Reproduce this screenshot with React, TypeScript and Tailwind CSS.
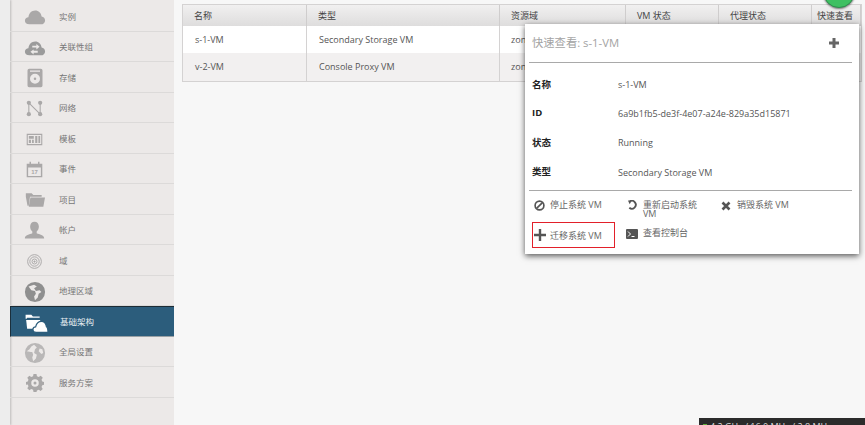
import type { ReactNode } from "react";

const cjk = "font-['Open_Sans','Noto_Sans_CJK_SC',sans-serif]";

function Svg({ children, w = 22, h = 22 }: { children: ReactNode; w?: number; h?: number }) {
  return (
    <svg width={w} height={h} viewBox="0 0 24 24" fill="currentColor">
      {children}
    </svg>
  );
}

const cloud = "M6 20C2.500 20 1 18 1 16c0-2.200 1.800-3.600 3.800-3.700C5.400 8 8.300 5 12.200 5c3.800 0 6.400 2.800 7 6.400 2.200.3 3.800 2 3.800 4.300 0 2.500-2 4.300-4.500 4.300z";

const menu: { label: string; icon: ReactNode; active?: boolean }[] = [
  { label: "实例", icon: <Svg><path d={cloud} /></Svg> },
  {
    label: "关联性组",
    icon: (
      <Svg>
        <path d={cloud} className="text-[#9b9b9b]" />
        <path d="M9 9.500h4.500V7.500l3.500 3-3.500 3v-2H9zM15 15H10.500v-1.500L7 16l3.500 3v-1.800H15z" fill="#ece9e8" />
      </Svg>
    ),
  },
  {
    label: "存储",
    icon: (
      <Svg w={20} h={20}>
        <path fillRule="evenodd" d="M5 1h14a2 2 0 0 1 2 2v18a2 2 0 0 1-2 2H5a2 2 0 0 1-2-2V3a2 2 0 0 1 2-2zm7 6a6 6 0 1 0 0 12 6 6 0 0 0 0-12zm0 4.500a1.500 1.500 0 1 1 0 3 1.500 1.500 0 0 1 0-3zM6 3v1.500h12V3z" />
      </Svg>
    ),
  },
  {
    label: "网络",
    icon: (
      <Svg w={17} h={17}>
        <path d="M4 4v16M4 4l16 16M20 4v16" stroke="currentColor" strokeWidth="1.500" fill="none" />
        <circle cx="4" cy="4" r="3" />
        <circle cx="20" cy="4" r="3" />
        <circle cx="4" cy="20" r="3" />
        <circle cx="20" cy="20" r="3" />
      </Svg>
    ),
  },
  {
    label: "模板",
    icon: (
      <Svg w={17} h={17}>
        <path fillRule="evenodd" d="M1 4h22v16H1zm1.500 1.500v13h19v-13zM4 7h7v4H4zm9 0h3v10h-3zm4.500 0H20v10h-2.500zM4 12.500h3V17H4zm4.500 0H11V17H8.500z" />
      </Svg>
    ),
  },
  {
    label: "事件",
    icon: (
      <div className="relative flex h-[17px] w-[17px] items-center justify-center">
        <Svg w={17} h={17}>
          <path fillRule="evenodd" d="M1 4h4V1h2v3h10V1h2v3h4v19H1zm2 5v12h18V9z" />
        </Svg>
        <span className="absolute top-[7px] font-['Liberation_Sans',sans-serif] text-[6px] leading-[8px] font-bold">17</span>
      </div>
    ),
  },
  {
    label: "项目",
    icon: (
      <Svg w={20} h={20}>
        <path d="M1 4h7l2 2h10v2H6L4.500 19H3L1 8zM6.500 9H24l-2 11H4.500z" />
      </Svg>
    ),
  },
  {
    label: "帐户",
    icon: (
      <Svg w={21} h={21}>
        <path d="M12 2c3 0 5 2.300 5 5.500 0 2.500-1 4.500-2.500 5.500v2c3 1.200 8.500 2 8.500 5.500v.5H1v-.5c0-3.500 5.500-4.300 8.500-5.500v-2C8 12 7 10 7 7.500 7 4.300 9 2 12 2z" />
      </Svg>
    ),
  },
  {
    label: "域",
    icon: (
      <svg width="15" height="15" viewBox="0 0 24 24" fill="none" stroke="currentColor" strokeWidth="1.500">
        <circle cx="12" cy="12" r="11" />
        <circle cx="12" cy="12" r="7.500" />
        <circle cx="12" cy="12" r="4" />
        <circle cx="12" cy="12" r="1" fill="currentColor" />
      </svg>
    ),
  },
  {
    label: "地理区域",
    icon: (
      <div className="text-[#8f8f8f]">
        <Svg>
          <path fillRule="evenodd" d="M12 1a11 11 0 1 1 0 22 11 11 0 0 1 0-22zM5 6l3 4 4 1 1 3-2 3 1 4 3-3 1-4 3-2-2-2-4 1-2-3 3-2-3-2z" />
        </Svg>
      </div>
    ),
  },
  {
    label: "基础架构",
    active: true,
    icon: (
      <Svg w={25} h={25}>
        <path d="M2.500 4.500h5.500l1.500 1.700h6.500v1.300H4l-.5 1H2.500z" />
        <path d="M3 9.500h13.500V18H4z" />
        <path d="M12.500 21.500c-1.800 0-3-1.100-3-2.600 0-1.500 1.200-2.600 2.600-2.700.8-3 3-5.200 5.600-5.200 2.700 0 4.400 2.300 4.800 5 1 .6 1.500 2 1.500 5.500z" stroke="#2c5d7c" strokeWidth="1.200" />
      </Svg>
    ),
  },
  {
    label: "全局设置",
    icon: (
      <div className="text-[#b9b7b7]">
        <Svg>
          <path fillRule="evenodd" d="M12 1a11 11 0 1 1 0 22 11 11 0 0 1 0-22zM3 10c2 0 4 1 6 1l1 3-1 3 1 4 3-3 1-4-3-2 1-4 2-2-3-3-3 2-2 3zm14-3-1 3 3 3 2-1-1-4z" />
        </Svg>
      </div>
    ),
  },
  {
    label: "服务方案",
    icon: (
      <Svg w={18} h={18}>
        <path fillRule="evenodd" d="M10 0h4l.6 3 2.400 1 2.600-1.700 2.800 2.800L20.700 7.700l1 2.300 2.300.6v3.800l-2.300.6-1 2.400 1.600 2.500-2.800 2.800-2.500-1.600-2.400 1L14 24h-4l-.6-2.900-2.400-1-2.500 1.600-2.800-2.800 1.600-2.500-1-2.400L0 14.400v-3.800L2.300 10l1-2.300-1.600-2.600 2.800-2.800L7 4l2.400-1zm2 7a5 5 0 1 0 0 10 5 5 0 0 0 0-10zm0 3a2 2 0 1 1 0 4 2 2 0 0 1 0-4z" />
      </Svg>
    ),
  },
];

const columns = [
  { label: "名称", w: "w-[124px]", pl: "pl-[11px]" },
  { label: "类型", w: "w-[193px]", pl: "pl-[11px]" },
  { label: "资源域", w: "w-[126px]", pl: "pl-[11px]" },
  { label: "VM 状态", w: "w-[93px]", pl: "pl-[11px]" },
  { label: "代理状态", w: "w-[93px]", pl: "pl-[11px]" },
  { label: "快速查看", w: "w-[49px]", pl: "pl-[5px]" },
];

const rows = [
  { name: "s-1-VM", type: "Secondary Storage VM", bg: "bg-white", h: "h-[27px]" },
  { name: "v-2-VM", type: "Console Proxy VM", bg: "bg-[#f2f0f0]", h: "h-[28px]" },
];

const details = [
  { label: "名称", value: "s-1-VM", h: "h-[28px]" },
  { label: "ID", value: "6a9b1fb5-de3f-4e07-a24e-829a35d15871", h: "h-[29px]" },
  { label: "状态", value: "Running", h: "h-[30px]" },
  { label: "类型", value: "Secondary Storage VM", h: "h-[29px]" },
];

function Sidebar() {
  return (
    <div className="flex w-[174px] shrink-0 flex-col pt-px">
      {menu.map((m) => (
        <div key={m.label} className="ml-[10px] flex">
          <div
            className={
              m.active
                ? "flex h-[30.500px] w-[164px] items-center border-t border-b border-l border-t-[#1d2c35] border-b-[#9aa1a5] border-l-[#1b2f3c] bg-[#2c5d7c] pt-[2px] text-white"
                : "flex h-[30.500px] w-[164px] items-center border-b border-[#dcdad9] pt-[3px] text-[#aaa8a8]"
            }
          >
            <div className="flex w-[49px] items-center justify-center">{m.icon}</div>
            <span className={`text-[8.500px] ${m.active ? "text-[#e8eef2]" : "text-[#777]"}`}>{m.label}</span>
          </div>
        </div>
      ))}
    </div>
  );
}

function SystemVmTable() {
  return (
    <div className="mt-[4px] ml-[8px] w-[680px] shrink-0 self-start border border-[#d4d2d2] bg-white text-[9px] text-[#555]">
      <div className="flex h-[21px] bg-gradient-to-b from-[#f1f0f0] to-[#dedddd] text-[#444]">
        {columns.map((c) => (
          <div key={c.label} className={`${c.w} ${c.pl} flex shrink-0 items-center border-r border-[#cfcdcd]`}>
            {c.label}
          </div>
        ))}
      </div>
      {rows.map((r) => (
        <div key={r.name} className={`flex ${r.h} ${r.bg}`}>
          <div className="flex w-[124px] shrink-0 items-center border-r border-[#d4d2d2] pl-[12px]">{r.name}</div>
          <div className="flex w-[193px] shrink-0 items-center border-r border-[#d4d2d2] pl-[12px]">{r.type}</div>
          <div className="flex w-[126px] shrink-0 items-center border-r border-[#d4d2d2] pl-[11px]">zone1</div>
        </div>
      ))}
    </div>
  );
}

function Action({ icon, children, w, boxed }: { icon: ReactNode; children: ReactNode; w: string; boxed?: boolean }) {
  return (
    <div className={`flex ${w} shrink-0 items-start`}>
      <div className={boxed ? "flex h-[26px] w-[83px] items-center border-[1.500px] border-[#e2202a]" : "flex pl-[3px]"}>
        <div className="flex h-[11px] w-[14px] shrink-0 items-center justify-center text-[#555]">{icon}</div>
        <div className={`${boxed ? "ml-[3px]" : "ml-[4px]"} text-[9px] leading-[9px] text-[#666]`}>{children}</div>
      </div>
    </div>
  );
}

function QuickView() {
  return (
    <div className="absolute top-[24px] left-[525px] h-[230px] w-[334px] bg-white pr-[7px] pl-[4px] shadow-[0_2px_6px_rgba(0,0,0,0.65)]">
      <div className="flex h-[39px] items-center justify-between border-b border-[#a9a9a9] pr-[12px] pl-[3px]">
        <span className="text-[11.300px] text-[#a3a3a3]">快速查看: s-1-VM</span>
        <svg width="12" height="12" viewBox="0 0 12 12" fill="#666">
          <path d="M4.500 1h3v3.500H11v3H7.500V11h-3V7.500H1v-3h3.500z" />
        </svg>
      </div>
      <div className="border-b border-[#a9a9a9] pt-[8px] pb-[3px]">
        {details.map((d) => (
          <div key={d.label} className={`flex ${d.h} items-center pl-[3px]`}>
            <span className="w-[86px] shrink-0 text-[9.500px] font-bold text-[#222]">{d.label}</span>
            <span className="text-[9px] text-[#555]">{d.value}</span>
          </div>
        ))}
      </div>
      <div className="flex pt-[9px]">
        <Action
          w="w-[93px]"
          icon={
            <svg width="11" height="11" viewBox="0 0 12 12" fill="none" stroke="currentColor" strokeWidth="1.800">
              <circle cx="6" cy="6" r="4.800" />
              <path d="M2.800 9.200l6.400-6.400" />
            </svg>
          }
        >
          停止系统 VM
        </Action>
        <Action
          w="w-[94px]"
          icon={
            <svg width="11" height="11" viewBox="0 0 12 12" fill="none" stroke="currentColor" strokeWidth="2">
              <path d="M3 1.500a4.300 4.300 0 1 1-.5 7" />
              <path d="M1 .5l4 .3L3 4.500z" fill="currentColor" stroke="none" />
            </svg>
          }
        >
          <div className="w-[56px]">重新启动系统 VM</div>
        </Action>
        <Action
          w="w-[100px]"
          icon={
            <svg width="10" height="10" viewBox="0 0 10 10" stroke="currentColor" strokeWidth="2.600">
              <path d="M1.500 1.500l7 7M8.500 1.500l-7 7" />
            </svg>
          }
        >
          销毁系统 VM
        </Action>
      </div>
      <div className="mt-[4px] flex pl-[3px]">
        <Action
          w="w-[90px]"
          boxed
          icon={
            <svg width="12" height="12" viewBox="0 0 12 12" fill="currentColor">
              <path d="M4.800 0h2.400v4.800H12v2.400H7.200V12H4.800V7.200H0V4.800h4.800z" />
            </svg>
          }
        >
          迁移系统 VM
        </Action>
        <div className="pt-[6px]">
          <Action
            w="w-[100px]"
            icon={
              <svg width="12" height="10" viewBox="0 0 12 10">
                <rect width="12" height="10" rx="1" fill="#555" />
                <path d="M2 2.500L4.500 5 2 7.500M5.500 7.500h3" stroke="#fff" strokeWidth="1" fill="none" />
              </svg>
            }
          >
            查看控制台
          </Action>
        </div>
      </div>
    </div>
  );
}

export default function App() {
  return (
    <div className={`relative flex h-[425px] w-[865px] overflow-hidden bg-[#f7f7f7] ${cjk}`}>
      <div className="absolute top-0 bottom-0 left-0 w-[174px] bg-[#ece9e8]" />
      <div className="absolute top-0 bottom-0 left-0 w-[10px] bg-[#ededed] shadow-[1px_0_2px_rgba(0,0,0,0.2)]" />
      <div className="relative flex">
        <Sidebar />
        <SystemVmTable />
      </div>
      <QuickView />
      <div className="absolute top-[-24px] left-[823px] h-[32px] w-[32px] rounded-full border border-[#2f8f4e] bg-[#3fc062] shadow-[0_1px_2px_rgba(0,0,0,0.5)]" />
      <div className="absolute top-[418px] left-[699px] flex h-[14px] w-[166px] items-start gap-[3px] bg-[#2b2b2b] pt-[3px] pl-[4px] text-[9px] leading-[11px] text-[#ddd]">
        <span className="mt-[3px] h-[4px] w-[4px] shrink-0 bg-[#5fae3a]" />
        <span className="whitespace-nowrap">4.2 GHz / 16.0 MHz / 2.8 MHz</span>
      </div>
    </div>
  );
}
